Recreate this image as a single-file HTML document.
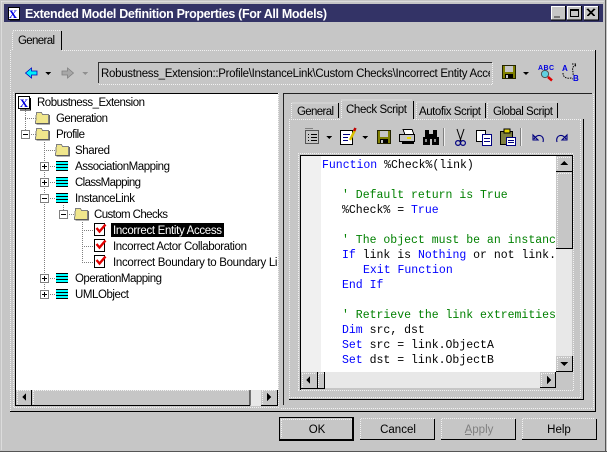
<!DOCTYPE html>
<html><head><meta charset="utf-8"><style>
html,body{margin:0;padding:0;background:#c6c6c6;overflow:hidden}
svg{display:block}
.u{font-family:"Liberation Sans",sans-serif;font-size:11.5px;fill:#000}
.m{font-family:"Liberation Mono",monospace;font-size:11.5px;fill:#000;white-space:pre}
.b{fill:#0000ff}.g{fill:#008000}
.w{stroke:#f2f2f2;stroke-width:1;stroke-dasharray:1 1;fill:none}
.k{stroke:#000;stroke-width:1;fill:none}
.d{stroke:#808080;stroke-width:1;stroke-dasharray:1 1;fill:none}
</style></head><body>
<svg xmlns="http://www.w3.org/2000/svg" width="607" height="452" viewBox="0 0 607 452">
<defs>
<g id="folder" shape-rendering="crispEdges"><path d="M1.5 1.5h5l1 2h6v9h-13z" fill="#f0e68c" stroke="#808080"/><path d="M14.5 4v9h-13" stroke="#000" fill="none" opacity=".6"/></g>
<g id="cls" shape-rendering="crispEdges"><rect x="0" y="0" width="12" height="10" fill="#00ffff"/><path d="M0 .5h12M0 3.5h12M0 6.5h12M0 9.5h12" stroke="#000"/></g>
<g id="chk"><path d="M.5.5h10v12H.5z" fill="#fff" stroke="#000" shape-rendering="crispEdges"/><path d="M2.5 5l3 3.5 6-7" fill="none" stroke="#e00000" stroke-width="2.4"/></g>
<g id="plus" shape-rendering="crispEdges"><rect x=".5" y=".5" width="8" height="8" fill="#fff" stroke="#808080"/><path d="M2 4.500h5M4.500 2v5" stroke="#000"/></g>
<g id="minus" shape-rendering="crispEdges"><rect x=".5" y=".5" width="8" height="8" fill="#fff" stroke="#808080"/><path d="M2 4.500h5" stroke="#000"/></g>
<g id="disk" shape-rendering="crispEdges"><rect x="0" y="0" width="14" height="14" fill="#808000"/><rect x="3" y="1" width="8" height="6" fill="#c6c6c6"/><rect x="3" y="9" width="8" height="5" fill="#000"/><rect x="4" y="10" width="2" height="3" fill="#c6c6c6"/><path d="M.5.5h13v13H.5z" fill="none" stroke="#222200"/></g>
</defs>
<rect width="607" height="452" fill="#c6c6c6"/>
<g shape-rendering="crispEdges">
<!-- window frame -->
<path class="w" d="M1.500 1.500H604M1.500 1.500V450"/>
<path d="M605.500 0V452M0 451.500H607" stroke="#555" fill="none"/>
<rect x="4" y="4" width="599" height="18" fill="#333366"/>
<!-- title buttons -->
<g fill="#c6c6c6"><rect x="551" y="6" width="15" height="14"/><rect x="567" y="6" width="15" height="14"/><rect x="584" y="6" width="15" height="14"/></g>
<path d="M551.500 19.500V6.500H565M567.500 19.500V6.500H581M584.500 19.500V6.500H598" stroke="#fff" fill="none"/>
<path d="M565.500 6V20H551M581.500 6V20H567M598.500 6V20H584" stroke="#000" fill="none"/>
<rect x="554" y="16" width="6" height="2" fill="#777"/>
<path d="M570.500 9.500h8v7h-8zM570 10.500h9" stroke="#000" fill="none"/>
<path d="M587 9l7 7M588 9l7 7M594 9l-7 7M595 9l-7 7" stroke="#000"/>
<!-- title icon -->
<rect x="9" y="8" width="11" height="11" fill="#fff"/><path d="M8.500 7.500h11v12h-11z" stroke="#000" fill="none"/><path d="M19.500 9v11H10" stroke="#000" fill="none"/>
<!-- outer tab -->
<path class="w" d="M12.500 50V32h1M13 30.500H61M62 50.500H595M10.500 50V411"/>
<path class="k" d="M61.500 31V50M595.500 50V412M10 411.500H596"/>
<!-- path box -->
<rect x="98" y="62" width="394" height="23" fill="#c6c6c6"/>
<path d="M98 62.500H492M98.500 62V83" stroke="#333" fill="none"/>
<path class="w" d="M99 84.500H492.500V63"/>
<!-- nav -->
<path d="M45 72h6l-3 3z" fill="#000"/><path d="M82 72h6l-3 3z" fill="#909090"/>
</g>
<path d="M25.500 73l6-5v3h5.500v4h-5.500v3z" fill="#00f0f8" stroke="#0000c0" stroke-width=".8"/>
<path d="M73.500 73l-6-5v3h-5.500v4h5.500v3z" fill="#a8a8a8" stroke="#808080" stroke-width=".8"/>
<use href="#disk" x="502" y="65"/>
<path d="M523 72h6l-3 3z" fill="#000"/>
<text x="538" y="70" font-family="Liberation Sans" font-size="7" font-weight="bold" fill="#0000e0" textLength="16">ABC</text>
<circle cx="545" cy="74" r="3.600" fill="#60d0e0" stroke="#505050"/><path d="M548 77l4 3.500" stroke="#e00000" stroke-width="2.500"/>
<text x="562" y="71" font-family="Liberation Sans" font-size="8" font-weight="bold" fill="#0000e0">A</text>
<text x="573" y="81" font-family="Liberation Sans" font-size="8" font-weight="bold" fill="#0000e0">B</text>
<path d="M572 64h4l-1 3 M576 65c-6 2-2 7-3 10M563 73c0 4 3 6 8 5l2 1" fill="none" stroke="#000" stroke-dasharray="1.500 1"/>

<!-- title + path text -->
<text x="25" y="18" font-family="Liberation Sans,sans-serif" font-size="12.500" font-weight="bold" fill="#fff" textLength="302" lengthAdjust="spacing">Extended Model Definition Properties (For All Models)</text>
<text x="13" y="18" font-family="Liberation Serif" font-size="12" font-weight="bold" fill="#0000e0" text-anchor="middle">X</text>
<text class="u" x="18" y="44" textLength="37">General</text>
<svg x="99" y="63" width="391" height="21"><text class="u" x="2" y="14" textLength="404" lengthAdjust="spacing">Robustness_Extension::Profile\InstanceLink\Custom Checks\Incorrect Entity Access</text></svg>

<!-- LEFT TREE -->
<g shape-rendering="crispEdges">
<rect x="16" y="94" width="262" height="296" fill="#fff"/>
<path class="k" d="M15.500 94V406M15 93.500H278"/>
<path class="w" d="M278.500 93V407M14 407.500H279M13.500 92V407"/>
<!-- scrollbar -->
<rect x="32" y="390" width="218" height="15" fill="#c6c6c6"/>
<rect x="250" y="390" width="11" height="16" fill="#e8e8e8"/>
<path class="w" d="M33 390.500H250M33.500 391V404M17 390.500H31M17.500 391V404M262 390.500H276M262.500 391V404"/>
<path class="k" d="M31.500 390V405M16 405.500H250M250 405.500V390M261 405.500H277M277.500 390V406"/>
<path d="M26 393v8l-4-4z M267 393v8l4-4z" fill="#000"/>
<!-- tree lines -->
<path class="d" d="M25.500 109V130M25 118.500H36M29 134.500H36M44.500 142V294M44 150.500H56M48 166.500H56M48 182.500H56M48 198.500H56M48 278.500H56M48 294.500H56M63.500 205V210M67 214.500H75M82.500 222V262M82 230.500H93M82 246.500H93M82 262.500H93"/>
<use href="#minus" x="21" y="130"/><use href="#plus" x="40" y="162"/><use href="#plus" x="40" y="178"/><use href="#minus" x="40" y="194"/><use href="#minus" x="59" y="210"/><use href="#plus" x="40" y="274"/><use href="#plus" x="40" y="290"/>
<!-- root icon -->
<rect x="18.500" y="96.500" width="11" height="12" fill="#fff" stroke="#000"/><path d="M30.500 98v12H20" stroke="#000" fill="none"/>
<rect x="111" y="223" width="113" height="14" fill="#000"/>
</g>
<text x="24" y="107" font-family="Liberation Serif" font-size="12" font-weight="bold" fill="#0000e0" text-anchor="middle">X</text>
<use href="#folder" x="35" y="111"/><use href="#folder" x="35" y="127"/><use href="#folder" x="55" y="143"/><use href="#folder" x="74" y="207"/>
<use href="#cls" x="56" y="161"/><use href="#cls" x="56" y="177"/><use href="#cls" x="56" y="193"/><use href="#cls" x="56" y="273"/><use href="#cls" x="56" y="289"/>
<use href="#chk" x="94" y="223"/><use href="#chk" x="94" y="239"/><use href="#chk" x="94" y="255"/>
<g class="u">
<text x="37" y="106" textLength="108">Robustness_Extension</text>
<text x="56" y="122" textLength="52">Generation</text>
<text x="56" y="138" textLength="29">Profile</text>
<text x="75" y="154" textLength="35">Shared</text>
<text x="75" y="170" textLength="95">AssociationMapping</text>
<text x="75" y="186" textLength="66">ClassMapping</text>
<text x="75" y="202" textLength="60">InstanceLink</text>
<text x="94" y="218" textLength="74">Custom Checks</text>
<text x="113" y="234" textLength="109" style="fill:#fff">Incorrect Entity Access</text>
<text x="113" y="250" textLength="134">Incorrect Actor Collaboration</text>
<svg x="113" y="255" width="164" height="16"><text x="0" y="11" textLength="176">Incorrect Boundary to Boundary Link</text></svg>
<text x="75" y="282" textLength="87">OperationMapping</text>
<text x="75" y="298" textLength="54">UMLObject</text>
</g>

<!-- RIGHT PANE -->
<g shape-rendering="crispEdges">
<path d="M283.500 93V405M283 93.500H592" stroke="#222" fill="none"/>
<path class="w" d="M281 408.500H594M593.500 94V408"/>
<!-- inner tabs -->
<path class="w" d="M291.500 118V103H338M341.500 118V100H412M416.500 118V102H485M487.500 118V102H557M289.500 119V399M289 119.500H341M414 119.500H582"/>
<path class="k" d="M338.500 103V118M413.500 101V119M485.500 103V118M557.500 103V118M583.500 119V400M289 399.500H584"/>
<path class="w" d="M291 397.500H580.500V120"/>
<!-- separators -->
<path d="M443.500 128V146M520.500 128V146" stroke="#808080"/><path d="M444.500 128V146M521.500 128V146" stroke="#eee"/>
<path d="M326 136h6l-3 3zM362 136h6l-3 3z" fill="#000"/>
</g>
<g class="u">
<text x="297" y="115" textLength="37">General</text>
<text x="346" y="113" textLength="61">Check Script</text>
<text x="419" y="115" textLength="62">Autofix Script</text>
<text x="493" y="115" textLength="60">Global Script</text>
</g>
<!-- toolbar 2 icons -->
<g shape-rendering="crispEdges">
<rect x="305.500" y="130.500" width="13" height="13" fill="#c6c6c6" stroke="#555"/><path d="M305 128.500h8" stroke="#808080"/><path d="M308 134.500h1M311 134.500h6M308 137.500h1M311 137.500h6M308 140.500h1M311 140.500h6" stroke="#000"/>
<rect x="340.500" y="130.500" width="12" height="14" fill="#fff" stroke="#000"/><path d="M343 134.500h7M343 137.500h5M343 140.500h5" stroke="#000080"/>
</g>
<path d="M350 140l5-10" stroke="#d8c000" stroke-width="2.500"/><path d="M354 131l1.500-3" stroke="#c00000" stroke-width="2.500"/>
<use href="#disk" x="377" y="130"/>
<g shape-rendering="crispEdges">
<path d="M403 129.500h9l2 5h-9z" fill="#fff" stroke="#000"/><rect x="399.500" y="134.500" width="15" height="7" fill="#c6c6c6" stroke="#000"/><rect x="402" y="142" width="12" height="2" fill="#000"/><rect x="407" y="137" width="4" height="2" fill="#e8d800"/>
<rect x="423" y="137" width="7" height="8" fill="#000"/><rect x="432" y="137" width="7" height="8" fill="#000"/><rect x="425" y="130" width="4" height="8" fill="#000"/><rect x="433" y="130" width="4" height="8" fill="#000"/><rect x="429" y="134" width="4" height="5" fill="#000"/><rect x="425" y="139" width="2" height="3" fill="#909090"/><rect x="434" y="139" width="2" height="3" fill="#909090"/>
<rect x="476.500" y="130.500" width="9" height="11" fill="#fff" stroke="#000"/><rect x="482.500" y="134.500" width="9" height="11" fill="#fff" stroke="#000080"/><path d="M484 138.500h6M484 141.500h6" stroke="#000080"/>
<rect x="500.500" y="131.500" width="12" height="13" fill="#808040" stroke="#000"/><rect x="504" y="129" width="6" height="4" fill="#e8d800" stroke="#000"/><rect x="506.500" y="137.500" width="9" height="8" fill="#fff" stroke="#000080"/><path d="M508 140.500h6M508 142.500h6" stroke="#000080"/>
</g>
<g fill="none" stroke="#000080" stroke-width="1.200"><circle cx="458" cy="143" r="2.400"/><circle cx="463" cy="143" r="2.400"/></g>
<path d="M457 129l4 12M464 129l-4 12" stroke="#000" fill="none"/>
<path d="M534 139c3-6 11-4 9 3M533 135v5h5z" fill="none" stroke="#000080" stroke-width="1.100"/>
<path d="M566 139c-3-6-11-4-9 3M567 135v5h-5z" fill="none" stroke="#000080" stroke-width="1.100"/>

<!-- editor -->
<g shape-rendering="crispEdges">
<rect x="301" y="156" width="272" height="232" fill="#c6c6c6"/>
<rect x="301" y="156" width="20" height="216" fill="#f0f0f0"/>
<rect x="321" y="156" width="235" height="216" fill="#fff"/>
<path class="k" d="M300 155.500H573M300.500 156V390"/>
<path class="w" d="M573.500 155V390.500H298M298.500 153V390M298 153.500H574"/>
<!-- v scroll -->
<rect x="556" y="156" width="16" height="216" fill="#e8e8e8"/>
<rect x="556" y="156" width="16" height="15" fill="#c6c6c6"/>
<rect x="556" y="172" width="16" height="76" fill="#c6c6c6"/>
<rect x="556" y="356" width="16" height="16" fill="#c6c6c6"/>
<path class="w" d="M557 157.500H571M557.500 158V170M558 173.500H571M557.500 174V247M557 357.500H571M557.500 358V371"/>
<path class="k" d="M556 171.500H572M572.500 156V172M556 248.500H573M572.500 172V249M556 371.500H573M572.500 356V372"/>
<path d="M564 161l4 4h-8zM560 362h8l-4 4z" fill="#000"/>
<!-- h scroll -->
<rect x="301" y="372" width="255" height="16" fill="#e8e8e8"/>
<rect x="301" y="372" width="16" height="16" fill="#c6c6c6"/><rect x="318" y="372" width="7" height="16" fill="#c6c6c6"/><rect x="540" y="372" width="16" height="16" fill="#c6c6c6"/>
<path class="w" d="M302 373.500H316M302.500 374V387M319 373.500H324M318.500 374V387M541 373.500H555M541.500 374V387"/>
<path class="k" d="M317.500 372V388M325 388.500H301M324.500 372V388M540 387.500H556M555.500 372V388"/>
<path d="M310 376v8l-4-4zM547 376v8l4-4z" fill="#000"/>
</g>
<svg x="321" y="156" width="235" height="216">
<g class="m" transform="translate(-321,-156)">
<text x="322" y="168"><tspan class="b">Function</tspan> %Check%(link)</text>
<text x="342" y="198" class="g">' Default return is True</text>
<text x="342" y="213">%Check% = <tspan class="b">True</tspan></text>
<text x="342" y="243" class="g">' The object must be an instance of</text>
<text x="342" y="258"><tspan class="b">If</tspan> link is <tspan class="b">Nothing</tspan> or not link.IsShortcut</text>
<text x="363" y="273" class="b">Exit Function</text>
<text x="342" y="288"><tspan class="b">End If</tspan></text>
<text x="342" y="318" class="g">' Retrieve the link extremities</text>
<text x="342" y="333"><tspan class="b">Dim</tspan> src, dst</text>
<text x="342" y="348"><tspan class="b">Set</tspan> src = link.ObjectA</text>
<text x="342" y="363"><tspan class="b">Set</tspan> dst = link.ObjectB</text>
</g>
</svg>

<!-- buttons -->
<g shape-rendering="crispEdges">
<path class="w" d="M281 419.500H352M281.500 420V438M361 418.500H434M360.500 419V439M442 418.500H515M441.500 419V439M523 418.500H595M522.500 419V439"/>
<path d="M279.500 417.500H353.500V440.500H279.500z" fill="none" stroke="#000"/>
<path d="M352.500 418V440M280 439.500H353" stroke="#000"/>
<path class="k" d="M434.500 419V440M360 439.500H435M515.500 419V440M441 439.500H516M596.500 419V440M522 439.500H597"/>
<path d="M465 434.500h6" stroke="#808080"/>
</g>
<g class="u" text-anchor="middle">
<text x="317" y="433">OK</text>
<text x="398" y="433">Cancel</text>
<text x="479" y="433" style="fill:#808080">Apply</text>
<text x="559" y="433">Help</text>
</g>
</svg>
</body></html>
